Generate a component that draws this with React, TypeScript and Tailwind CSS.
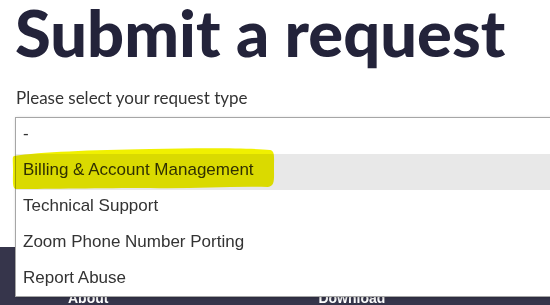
import React from "react";

const options = [
  "-",
  "Billing & Account Management",
  "Technical Support",
  "Zoom Phone Number Porting",
  "Report Abuse",
];

export default function App() {
  return (
    <div className="relative h-[305px] w-[550px] overflow-hidden bg-white">
      <div className="h-[247px] px-[14px]">
        <h1
          className="pl-[1px] text-[65px] font-black leading-[65px] text-[#23233a]"
          style={{ fontFamily: "Lato, sans-serif" }}
        >
          Submit a request
        </h1>
        <div
          className="mt-[23px] pl-[2px] text-[17px] leading-[20px] text-[#333333]"
          style={{ fontFamily: "Lato, sans-serif" }}
        >
          Please select your request type
        </div>
        <div className="relative">
          <div
            className="absolute left-[1px] top-[9px] z-10 w-[600px] border border-[#a6a6a6] bg-white shadow-[1px_1px_3px_rgba(0,0,0,0.25)]"
            style={{ fontFamily: "'Liberation Sans', Arial, sans-serif" }}
          >
            {options.map((o, i) => (
              <div
                key={o}
                className={
                  "pl-[7px] pt-[6px] text-[17px] leading-[20px] text-[#333333] " +
                  (i === 1 ? "bg-[#e8e8e8] " : "") +
                  (i === 4 ? "h-[34px]" : "h-[36px]")
                }
              >
                {o}
              </div>
            ))}
          </div>
        </div>
      </div>

      <footer
        className="flex h-[58px] bg-[#36354b] pt-[42px] text-[14px] font-bold leading-[18px] text-white"
        style={{ fontFamily: "'Liberation Sans', Arial, sans-serif" }}
      >
        <span className="ml-[68px]">About</span>
        <span className="ml-[210px]">Download</span>
      </footer>

      <svg
        className="pointer-events-none absolute left-0 top-0 z-20 mix-blend-multiply"
        width="550"
        height="305"
        viewBox="0 0 550 305"
      >
        <path
          d="M14 156 C40 152 90 150 150 149 C200 148 250 148 270 150 C275 151 274 156 274 168 C274 180 275 186 268 187 C230 186 190 189 150 188 C100 188 50 189 16 189 C12 189 13 180 13 170 C13 160 12 157 14 156 Z"
          fill="#f0f000"
        />
      </svg>
    </div>
  );
}
